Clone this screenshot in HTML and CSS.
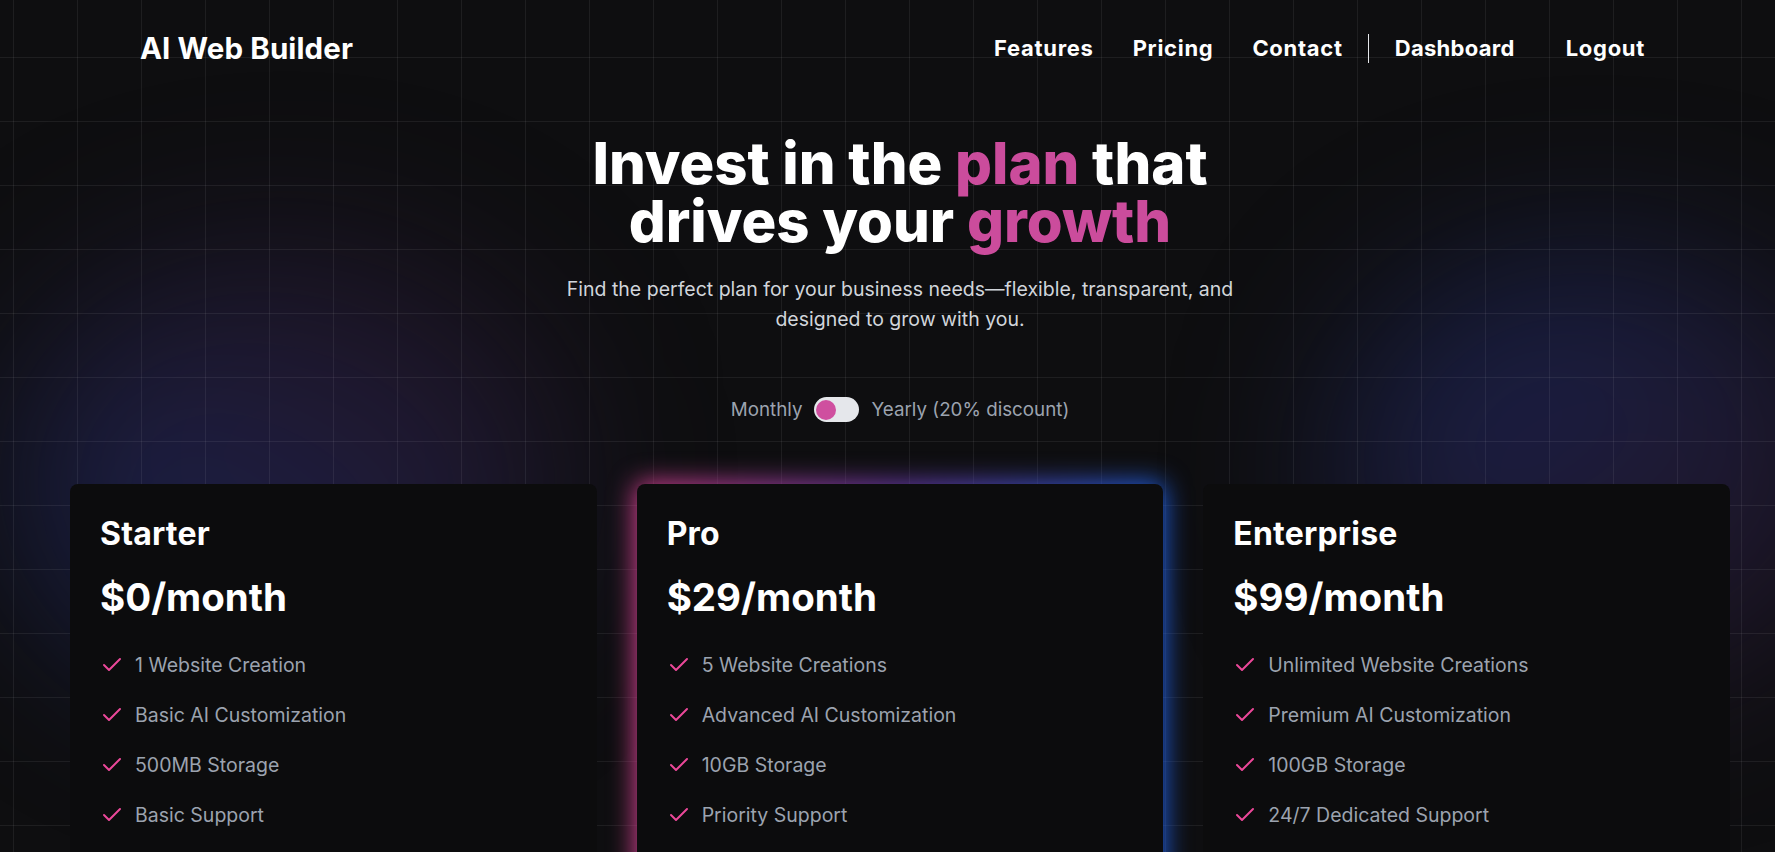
FILE: index.html
```html
<!DOCTYPE html>
<html lang="en">
<head>
<meta charset="utf-8">
<title>AI Web Builder — Pricing</title>
<link rel="stylesheet" href="styles.css">
</head>
<body>
<div class="page">
  <div class="glow glow-left"></div>
  <div class="glow glow-right"></div>
  <div class="content">
    <header class="nav">
      <div class="logo">AI Web Builder</div>
      <nav class="links">
        <a class="link" href="#">Features</a>
        <a class="link" href="#">Pricing</a>
        <a class="link" href="#">Contact</a>
        <span class="sep"></span>
        <a class="link dash" href="#">Dashboard</a>
        <a class="link" href="#">Logout</a>
      </nav>
    </header>

    <section class="hero">
      <h1 class="title">Invest in the <span class="accent">plan</span> that<br>drives your <span class="accent">growth</span></h1>
      <p class="subtitle">Find the perfect plan for your business needs—flexible, transparent, and designed to grow with you.</p>
      <div class="billing">
        <span class="billing-label">Monthly</span>
        <span class="switch"><span class="knob"></span></span>
        <span class="billing-label">Yearly (20% discount)</span>
      </div>
    </section>

    <section class="plans">
      <article class="card">
        <h2 class="plan-name">Starter</h2>
        <div class="price">$0/month</div>
        <ul class="features">
          <li><svg class="check" viewBox="0 0 24 24"><path d="M20 6 9 17l-5-5"/></svg>1 Website Creation</li>
          <li><svg class="check" viewBox="0 0 24 24"><path d="M20 6 9 17l-5-5"/></svg>Basic AI Customization</li>
          <li><svg class="check" viewBox="0 0 24 24"><path d="M20 6 9 17l-5-5"/></svg>500MB Storage</li>
          <li><svg class="check" viewBox="0 0 24 24"><path d="M20 6 9 17l-5-5"/></svg>Basic Support</li>
        </ul>
      </article>
      <article class="card featured">
        <h2 class="plan-name">Pro</h2>
        <div class="price">$29/month</div>
        <ul class="features">
          <li><svg class="check" viewBox="0 0 24 24"><path d="M20 6 9 17l-5-5"/></svg>5 Website Creations</li>
          <li><svg class="check" viewBox="0 0 24 24"><path d="M20 6 9 17l-5-5"/></svg>Advanced AI Customization</li>
          <li><svg class="check" viewBox="0 0 24 24"><path d="M20 6 9 17l-5-5"/></svg>10GB Storage</li>
          <li><svg class="check" viewBox="0 0 24 24"><path d="M20 6 9 17l-5-5"/></svg>Priority Support</li>
        </ul>
      </article>
      <article class="card">
        <h2 class="plan-name">Enterprise</h2>
        <div class="price">$99/month</div>
        <ul class="features">
          <li><svg class="check" viewBox="0 0 24 24"><path d="M20 6 9 17l-5-5"/></svg>Unlimited Website Creations</li>
          <li><svg class="check" viewBox="0 0 24 24"><path d="M20 6 9 17l-5-5"/></svg>Premium AI Customization</li>
          <li><svg class="check" viewBox="0 0 24 24"><path d="M20 6 9 17l-5-5"/></svg>100GB Storage</li>
          <li><svg class="check" viewBox="0 0 24 24"><path d="M20 6 9 17l-5-5"/></svg>24/7 Dedicated Support</li>
        </ul>
      </article>
    </section>
  </div>
</div>
</body>
</html>
```
FILE: styles.css
```css
html, body {
  margin: 0;
  padding: 0;
  background: #0e0e10;
  overflow: hidden;
}

.page {
  position: relative;
  width: 1800px;
  min-height: 1000px;
  background: #0e0e10;
  font-family: Inter, "Noto Sans", sans-serif;
  color: #fff;
  overflow: hidden;
}

.page::after {
  content: "";
  position: absolute;
  inset: 0;
  background-image:
    linear-gradient(to right, rgba(255,255,255,0.065) 1px, transparent 1px),
    linear-gradient(to bottom, rgba(255,255,255,0.065) 1px, transparent 1px);
  background-size: 64px 64px;
  background-position: 13px 57px;
  pointer-events: none;
}

.glow {
  position: absolute;
  border-radius: 50%;
  filter: blur(85px);
}

.glow-left {
  left: 20px;
  top: 250px;
  width: 540px;
  height: 440px;
  background: linear-gradient(35deg, rgba(40, 55, 145, 0.48) 20%, rgba(60, 48, 120, 0.36) 55%, rgba(85, 40, 95, 0.26) 90%);
}

.glow-right {
  left: 1340px;
  top: 260px;
  width: 520px;
  height: 430px;
  background: linear-gradient(145deg, rgba(40, 55, 145, 0.46) 20%, rgba(60, 48, 120, 0.34) 55%, rgba(85, 40, 95, 0.26) 90%);
}

.content {
  position: relative;
  z-index: 1;
}

/* NAV */
.nav {
  display: flex;
  align-items: center;
  justify-content: space-between;
  height: 96px;
  padding: 0 155px 0 140px;
}

.logo {
  font-size: 29.5px;
  font-weight: 700;
  letter-spacing: 0.1px;
}

.links {
  display: flex;
  align-items: center;
}

.link {
  color: #fff;
  text-decoration: none;
  font-size: 22px;
  font-weight: 700;
  letter-spacing: 0.7px;
  margin-left: 39px;
}

.sep {
  width: 1px;
  height: 29px;
  background: #e5e7eb;
  margin: 0 0 0 25px;
}

.link.dash {
  margin-left: 26px;
  margin-right: 12px;
  letter-spacing: 0.3px;
}

/* HERO */
.hero {
  display: flex;
  flex-direction: column;
  align-items: center;
  text-align: center;
  padding-top: 38px;
}

.title {
  margin: 0;
  font-size: 58px;
  line-height: 58px;
  font-weight: 800;
  letter-spacing: 0;
}

.accent {
  color: #cb4c9c;
}

.subtitle {
  margin: 24px 0 0;
  max-width: 700px;
  font-size: 19.5px;
  line-height: 30px;
  color: #d1d5db;
}

.billing {
  display: flex;
  align-items: center;
  gap: 12px;
  margin-top: 63px;
}

.billing-label {
  font-size: 18.8px;
  color: #9ca3af;
}

.switch {
  display: flex;
  align-items: center;
  width: 45px;
  height: 25px;
  border-radius: 13px;
  background: #e5e7eb;
  padding: 0 2px;
  box-sizing: border-box;
}

.knob {
  width: 20px;
  height: 20px;
  border-radius: 50%;
  background: #cf4f9f;
}

/* PLANS */
.plans {
  position: relative;
  z-index: 0;
  display: grid;
  grid-template-columns: repeat(3, 1fr);
  gap: 40px;
  padding: 0 70px;
  margin-top: 62px;
}

.card {
  position: relative;
  background: #0c0c0d;
  border-radius: 8px;
  padding: 31px 30px 120px;
  min-height: 420px;
}

.card.featured::before {
  content: "";
  position: absolute;
  inset: -2px;
  border-radius: 10px;
  background: linear-gradient(90deg, #d6408f 0%, #6a3aa8 50%, #1d5fe0 100%);
  filter: blur(13px);
  z-index: -1;
}

.plan-name {
  margin: 0;
  font-size: 32px;
  line-height: 38px;
  font-weight: 700;
  letter-spacing: 0.2px;
}

.price {
  margin-top: 21px;
  font-size: 38.5px;
  line-height: 46px;
  font-weight: 700;
  letter-spacing: 0;
}

.features {
  list-style: none;
  margin: 31px 0 0;
  padding: 0;
  display: flex;
  flex-direction: column;
  gap: 22px;
}

.features li {
  display: flex;
  align-items: center;
  height: 28px;
  font-size: 19.5px;
  color: #9ca3af;
}

.check {
  width: 24px;
  height: 24px;
  margin-right: 11px;
  fill: none;
  stroke: #ec4899;
  stroke-width: 2;
  stroke-linecap: round;
  stroke-linejoin: round;
  flex: none;
}
```
